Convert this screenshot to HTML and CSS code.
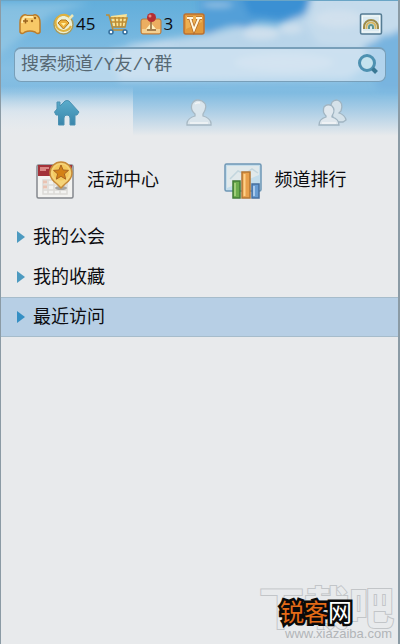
FILE: index.html
```html
<!DOCTYPE html>
<html lang="zh-CN">
<head>
<meta charset="utf-8">
<meta name="viewport" content="width=device-width, initial-scale=1">
<title>频道</title>
<link rel="stylesheet" href="styles.css">
</head>
<body>
<div class="window">
  <header class="header">
    <svg class="sky" viewBox="0 0 400 136" preserveAspectRatio="none" aria-hidden="true">
      <defs>
        <linearGradient id="sky" x1="0" y1="0" x2="0" y2="1">
          <stop offset="0" stop-color="#62aedb"/>
          <stop offset=".5" stop-color="#86bfe3"/>
          <stop offset=".68" stop-color="#80bbe1"/>
          <stop offset=".85" stop-color="#b7d3e7"/>
          <stop offset="1" stop-color="#e8eaec"/>
        </linearGradient>
        <filter id="soft" x="-30%" y="-50%" width="160%" height="200%"><feGaussianBlur stdDeviation="4"/></filter>
        <filter id="puff" x="-30%" y="-50%" width="160%" height="200%"><feGaussianBlur stdDeviation="3"/></filter>
      </defs>
      <rect width="400" height="136" fill="url(#sky)"/>
      <g filter="url(#soft)">
        <path d="M-10 2H90L50 14-10 60Z" fill="#a3d0e8" opacity=".5"/>
        <path d="M110 50 170 38 205 34 245 24 280 26 310 10 350 28 385 54 350 78 120 80Z" fill="#b9d5ea"/>
        <path d="M200-10H316L306 14 284 22 262 19 248 27 228 24 208 34 200 26Z" fill="#529fd8"/>
        <path d="M240-10H314L302 12 280 18 250 14Z" fill="#3b90d3"/>
        <path d="M314-10H420V38L385 34 370 48 320 44 306 22Z" fill="#c5dbec"/>
        <path d="M365 46 410 26V90H380Z" fill="#78b4df"/>
      </g>
      <g filter="url(#puff)" fill="#d5e2ee">
        <ellipse cx="218" cy="4" rx="16" ry="3" opacity=".5"/>
        <ellipse cx="262" cy="33" rx="18" ry="6" opacity=".8"/>
        <ellipse cx="292" cy="28" rx="12" ry="5" opacity=".7"/>
        <ellipse cx="340" cy="18" rx="24" ry="9" opacity=".7"/>
        <ellipse cx="285" cy="62" rx="50" ry="9" opacity=".7"/>
        <ellipse cx="150" cy="44" rx="24" ry="3" opacity=".4"/>
      </g>
    </svg>

    <div class="toolbar">
      <button class="tool" type="button" aria-label="游戏">
        <svg width="24" height="24" viewBox="0 0 24 24"><path d="M5 3.500Q7 2 9 3.500H15Q17 2 19 3.500Q22 5 22 11V20Q20 23 17 20Q12 18 7 20Q4 23 2 20V11Q2 5 5 3.500Z" fill="#f7c867" stroke="#ba7c2b" stroke-width="1.500"/><path d="M4 11Q5 4 9 5H15" stroke="#ffeaa8" stroke-width="2" fill="none"/><path d="M5 9H10M7.500 6.500V11.500" stroke="#9b641e" stroke-width="1.500"/><circle cx="14" cy="9" r="1.200" fill="#9b641e"/><circle cx="17" cy="6" r="1.200" fill="#9b641e"/></svg>
      </button>
      <button class="tool tool-coin" type="button">
        <svg width="24" height="24" viewBox="0 0 24 24" aria-hidden="true"><circle cx="11.500" cy="12.500" r="9.500" fill="#edf0d5" stroke="#a89b5d" stroke-width="1.500"/><path d="M18 6A8 8 0 1 0 19 14" fill="none" stroke="#dfb23e" stroke-width="2"/><path d="M6 11 9 8H14L17 11 11.500 17Z" fill="#edb039" stroke="#ac751d"/><path d="M9 11H14L11.500 14Z" fill="#fff0a0"/><path d="m17 7 4-4" stroke="#efe8b4" stroke-width="2.500"/></svg>
        <span>45</span>
      </button>
      <button class="tool tool-cart" type="button" aria-label="购物车">
        <svg width="24" height="24" viewBox="0 0 24 24"><path d="M6 4 22 2 20 14H8Z" fill="#fae395"/><path d="M1 3H4L8 18H21M5 6H22L20 15H7M6 10H21M10 5 11 15M14 5V15M18 5 17 15" fill="none" stroke="#bd8d35" stroke-width="1.500"/><circle cx="6" cy="20" r="2" fill="#fff" stroke="#356f9d" stroke-width="1.500"/><circle cx="20" cy="20" r="2" fill="#fff" stroke="#356f9d" stroke-width="1.500"/></svg>
      </button>
      <button class="tool tool-medal" type="button">
        <svg width="24" height="24" viewBox="0 0 24 24" aria-hidden="true"><rect x="2" y="7" width="20" height="15" rx="2" fill="#ecae61" stroke="#b8793b"/><path d="M3 17H21V21H3Z" fill="#f4d091"/><path d="M7 17 12 11 17 17Z" fill="#fff0bc"/><path d="M12 10V17M8 18H17" stroke="#8c6437" stroke-width="1.500"/><circle cx="12.500" cy="5.500" r="4.500" fill="#b52e32"/><circle cx="11" cy="4" r="1.500" fill="#e78b7c"/></svg>
        <span>3</span>
      </button>
      <button class="tool tool-vip" type="button" aria-label="会员">
        <svg width="22" height="24" viewBox="0 0 22 24"><rect x="1" y="2" width="20" height="20" rx="2" fill="#e29a3c" stroke="#bd7131" stroke-width="1.500"/><path d="M3 4H19V10L3 17Z" fill="#eeb052"/><path d="M4 6H10M13 6H19M7 6 11 18 16 6" fill="none" stroke="#b46c28" stroke-width="3.500"/><path d="M4 6H10M13 6H19M7 6 11 18 16 6" fill="none" stroke="#fff8df" stroke-width="2"/></svg>
      </button>
      <button class="tool tool-skin" type="button" aria-label="换肤">
        <svg width="24" height="24" viewBox="0 0 24 24"><rect x="1.500" y="2" width="21" height="20" rx="1.500" fill="#dceaf0" stroke="#567c94" stroke-width="1.500"/><rect x="3.500" y="4" width="17" height="16" fill="none" stroke="#f6fbfa"/><path d="M5 17V15A7 7 0 0 1 19 15V17" fill="none" stroke="#9c8b4b" stroke-width="2"/><path d="M7.500 17V15A4.500 4.500 0 0 1 16.500 15V17" fill="none" stroke="#d8b75f" stroke-width="2"/><path d="M10 17V15A2 2 0 0 1 14 15V17" fill="none" stroke="#5e9591" stroke-width="2"/></svg>
      </button>
    </div>

    <form class="search" role="search">
      <input class="search-input" type="text" aria-label="搜索" placeholder="搜索频道/Y友/Y群">
      <button class="search-button" type="button" aria-label="搜索">
        <svg width="24" height="24" viewBox="0 0 24 24"><circle cx="11" cy="10" r="7.500" fill="#c5e3ee" stroke="#4e91b1" stroke-width="3"/><path d="m16.500 15.500 4 4" stroke="#397894" stroke-width="4"/></svg>
      </button>
    </form>

    <nav class="tabs" aria-label="主导航">
      <button class="tab tab-active" type="button" aria-label="首页">
        <svg width="28" height="28" viewBox="0 0 28 28"><defs><linearGradient id="home" x1="0" y1="0" x2="0" y2="1"><stop stop-color="#5aaccb"/><stop offset="1" stop-color="#3a86ab"/></linearGradient></defs><path d="M4 3H7V7L12 2Q14 1 16 2L26 13 24 16H22V26H17V19Q17 16 14 16T11 19V26H5.500V16H3L1.500 13 4 10Z" fill="url(#home)" stroke="#4a91b2"/></svg>
      </button>
      <button class="tab" type="button" aria-label="好友">
        <svg width="28" height="28" viewBox="0 0 28 28"><path d="M10 15Q5 11 7 5Q10-1 17 2Q24 6 18 15L18 17Q25 19 26 24V26H2V24Q3 19 10 17Z" fill="#dae5ec" stroke="#a7b8c3" stroke-width="1.300"/><path d="M5 24H23M10 5Q12 3 15 4" fill="none" stroke="#f2f5f6" stroke-width="1.500"/></svg>
      </button>
      <button class="tab" type="button" aria-label="群组">
        <svg width="30" height="28" viewBox="0 0 30 28"><path d="M14 10Q13 1 20 1Q27 3 24 12L22 14Q28 16 29 21L26 23H17Z" fill="#d5e2ea" stroke="#a1b5c2" stroke-width="1.300"/><path d="M9 17Q5 13 7 8Q10 4 15 7Q19 11 15 17L15 18Q22 20 22 26H2Q2 20 9 18Z" fill="#e0e8ee" stroke="#a1b5c2" stroke-width="1.300"/><path d="M5 24H19" stroke="#f4f6f7" stroke-width="1.500"/></svg>
      </button>
    </nav>
  </header>

  <main class="content">
    <div class="shortcuts">
      <a class="shortcut" href="#">
        <svg width="40" height="40" viewBox="0 0 40 40" aria-hidden="true"><rect x="2" y="5" width="36" height="33" rx="1.500" fill="#f3f3f1" stroke="#84888d" stroke-width="1.500"/><path d="M3 5H37V16H3Z" fill="#a33239"/><path d="M5 8H14M5 10H11" stroke="#d98683" stroke-width="2"/><path d="M8 20H32V34H8ZM8 25H32M8 30H32M13 20V34M19 20V34M25 20V34" fill="none" stroke="#dcdad6" stroke-width="1.500"/><path d="M8 22H12M8 27H12" stroke="#e9c3b3" stroke-width="3"/><ellipse cx="26" cy="28" rx="6" ry="2" fill="#a6a5a2"/><path d="M15 13A11 11 0 0 1 37 13Q37 19 30 24L26 28 22 24Q15 19 15 13Z" fill="#f5d378" stroke="#c68a38" stroke-width="1.500"/><circle cx="26" cy="12.500" r="8" fill="#f4c85d"/><path d="m26 5 2.100 5 5.400.400-4.100 3.500 1.300 5.300L26 16.300 21.300 19.200 22.600 13.900 18.500 10.400 23.900 10Z" fill="#d48116" stroke="#a96422"/></svg>
        <span>活动中心</span>
      </a>
      <a class="shortcut" href="#">
        <svg width="40" height="40" viewBox="0 0 40 40" aria-hidden="true"><rect x="2" y="4" width="36" height="27" rx="1.500" fill="#c4ddeb" stroke="#6e97b5" stroke-width="1.500"/><path d="M4 6H36V15L4 28Z" fill="#e1e9eb"/><path d="m7 19 8-8 7 3 7-5 6 4" fill="none" stroke="#c3d6de" stroke-width="1.500"/><rect x="10" y="21" width="7" height="17" fill="#6cac4d" stroke="#427b36" stroke-width="1.500"/><path d="M12 23V36" stroke="#a0ce79" stroke-width="2"/><rect x="19" y="12" width="8" height="26" fill="#e8a04b" stroke="#b37734" stroke-width="1.500"/><path d="M21.500 14V36" stroke="#ffd28b" stroke-width="2"/><rect x="29" y="24" width="7" height="14" fill="#689cd2" stroke="#456f9f" stroke-width="1.500"/><path d="M31 26V36" stroke="#aacbee" stroke-width="2"/></svg>
        <span>频道排行</span>
      </a>
    </div>

    <div class="groups">
      <button class="group" type="button"><svg width="10" height="14" viewBox="0 0 10 14" aria-hidden="true"><path d="M1 1 9 7 1 13Z" fill="#4c9ac0"/></svg><span>我的公会</span></button>
      <button class="group" type="button"><svg width="10" height="14" viewBox="0 0 10 14" aria-hidden="true"><path d="M1 1 9 7 1 13Z" fill="#4c9ac0"/></svg><span>我的收藏</span></button>
      <button class="group group-selected" type="button"><svg width="10" height="14" viewBox="0 0 10 14" aria-hidden="true"><path d="M1 1 9 7 1 13Z" fill="#348fc4"/></svg><span>最近访问</span></button>
    </div>
  </main>

  <div class="watermark">
    <span class="mark-large">下载吧</span>
    <span class="mark-url">www.xiazaiba.com</span>
    <span class="mark-brand"><span class="mark-orange">锐客</span>网</span>
  </div>
</div>
</body>
</html>
```
FILE: styles.css
```css
* {
  box-sizing: border-box;
}

body {
  margin: 0;
  background: #e8eaec;
  color: #0c0c10;
  font: 18px/24px "Liberation Sans", "Noto Sans CJK SC", sans-serif;
}

button,
input {
  margin: 0;
  padding: 0;
  border: 0;
  background: none;
  color: inherit;
  font: inherit;
}

svg {
  display: block;
  flex: none;
}

.window {
  position: relative;
  min-height: 100vh;
  border: solid #8b9ba5;
  border-width: 0 2px 0 1px;
}

.header {
  position: relative;
  isolation: isolate;
  border-top: 1px solid #6aa5c6;
}

.sky {
  position: absolute;
  inset: 0;
  z-index: -1;
  width: 100%;
  height: 100%;
}

.toolbar {
  display: flex;
  align-items: center;
  padding: 11px 15px 11px 17px;
}

.tool {
  display: flex;
  align-items: center;
  font: 17px/24px "Open Sans", sans-serif;
}

.tool-coin,
.tool-cart,
.tool-medal,
.tool-vip {
  margin-left: 10px;
}

.tool-skin {
  margin-left: auto;
}

.search {
  display: flex;
  align-items: center;
  height: 35px;
  margin: 0 12px 0 13px;
  padding: 0 5px 0 6px;
  border: 1px solid #789fb9;
  border-top: 2px solid #789fb9;
  border-radius: 7px;
  background: rgba(215, 231, 243, .62);
}

.search-input {
  flex: 1;
  min-width: 0;
  height: 30px;
  outline: 0;
  font-family: "Liberation Mono", "Noto Sans CJK SC", monospace;
}

.search-input::placeholder {
  color: #566873;
  opacity: 1;
}

.tabs {
  display: grid;
  grid-template-columns: repeat(3, 1fr);
  margin-top: 4px;
}

.tab {
  display: flex;
  align-items: center;
  justify-content: center;
  height: 50px;
  padding-top: 4px;
}

.tab-active {
  background: linear-gradient(rgba(232, 236, 240, 0), rgba(232, 236, 240, .75) 50%, #e8eaec);
}

.shortcuts {
  display: grid;
  grid-template-columns: 1fr 1fr;
  column-gap: 12px;
  padding: 24px 0 17px 34px;
}

.shortcut {
  display: flex;
  align-items: center;
  gap: 12px;
  color: inherit;
  text-decoration: none;
}

.group {
  display: flex;
  align-items: center;
  gap: 7px;
  width: 100%;
  height: 40px;
  padding-left: 15px;
}

.group-selected {
  border: solid #a6bccb;
  border-width: 1px 0;
  background: #b7cfe5;
}

.watermark {
  position: absolute;
  right: 4px;
  bottom: 0;
  width: 134px;
  height: 64px;
}

.mark-large,
.mark-url,
.mark-brand {
  position: absolute;
  white-space: nowrap;
}

.mark-large {
  right: 0;
  bottom: 12px;
  color: #e8eaec;
  font: bold 45px/52px "Noto Sans CJK SC", sans-serif;
  -webkit-text-stroke: 2px #c2c5c8;
  paint-order: stroke fill;
}

.mark-url {
  right: 2px;
  bottom: 0;
  color: #b2b5b8;
  font-size: 13px;
  line-height: 20px;
}

.mark-brand {
  left: 20px;
  bottom: 17px;
  color: #fff;
  font: 24px/32px "Noto Sans CJK SC", sans-serif;
  -webkit-text-stroke: 5px #0a0a0a;
  paint-order: stroke fill;
}

.mark-orange {
  color: #e46b17;
}
```
